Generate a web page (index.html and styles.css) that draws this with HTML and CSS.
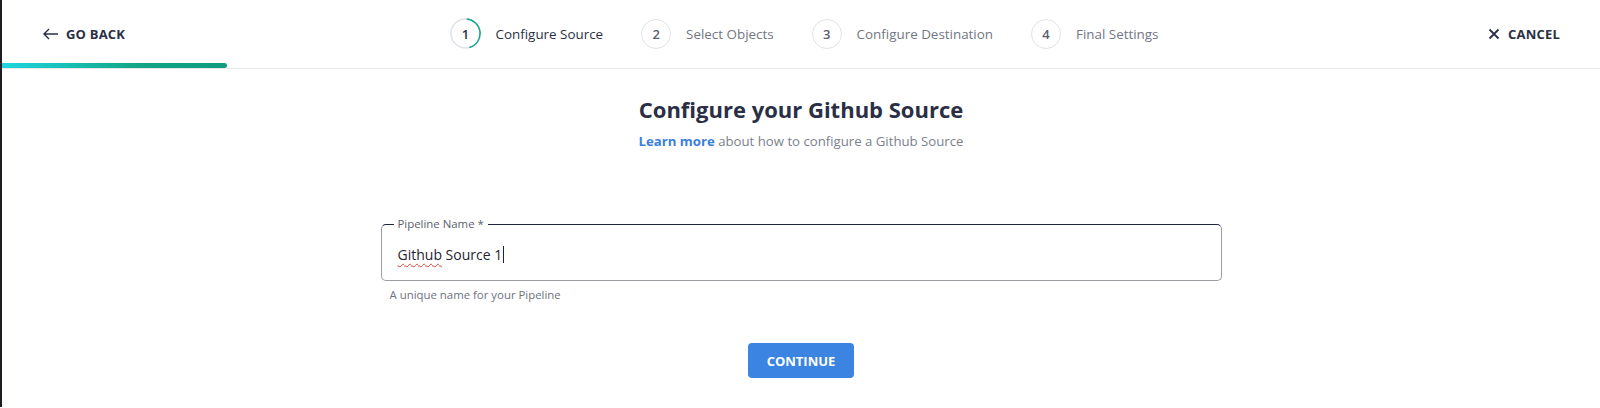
FILE: index.html
```html
<!DOCTYPE html>
<html lang="en">
<head>
    <meta charset="UTF-8">
    <meta name="viewport" content="width=device-width, initial-scale=1.0">
    <title>Create Pipeline</title>
    <link rel="stylesheet" href="styles.css">
</head>
<body>
    <div id="wizard">
        <div id="topbar">
            <a class="nav-link back" href="#">
                <svg width="16" height="12" viewBox="0 0 16 12"><path d="M15 6H1.5M6 1L1 6l5 5" fill="none" stroke="#2a2f45" stroke-width="1.4"/></svg>
                Go back
            </a>

            <ol id="steps">
                <li class="step active">
                    <span class="step-num">
                        <svg width="31" height="31" viewBox="0 0 32 32">
                            <circle cx="16" cy="16" r="15" fill="none" stroke="#dfe2e8" stroke-width="1.5"/>
                            <path d="M17.3 1.06A15 15 0 0 1 19.9 30.5" fill="none" stroke="#14a889" stroke-width="1.6"/>
                        </svg>
                        <b>1</b>
                    </span>
                    Configure Source
                </li>
                <li class="step"><span class="step-num"><b>2</b></span>Select Objects</li>
                <li class="step"><span class="step-num"><b>3</b></span>Configure Destination</li>
                <li class="step"><span class="step-num"><b>4</b></span>Final Settings</li>
            </ol>

            <a class="nav-link cancel" href="#">
                <svg width="12" height="12" viewBox="0 0 12 12"><path d="M1.5 1.5l9 9M10.5 1.5l-9 9" stroke="#2a2f45" stroke-width="1.8"/></svg>
                Cancel
            </a>

            <div id="progress"></div>
        </div>

        <div id="content">
            <h1>Configure your Github Source</h1>
            <p class="intro"><a href="#">Learn more</a> about how to configure a Github Source</p>

            <div class="field">
                <fieldset>
                    <legend>Pipeline Name *</legend>
                    <div class="field-value"><span class="typo">Github</span> Source 1<span class="caret"></span></div>
                </fieldset>
                <div class="hint">A unique name for your Pipeline</div>
            </div>

            <button>Continue</button>
        </div>
    </div>
</body>
</html>
```

FILE: styles.css
```css
body {
    margin: 0;
    font-family: "Open Sans", "Noto Sans", sans-serif;
    color: #2a2f45;
    background: #fff;
}

#wizard {
    border-left: 2px solid #1c1c24;
    min-height: 408px;
    box-sizing: border-box;
}

#topbar {
    position: relative;
    display: grid;
    grid-template-columns: 1fr auto 1fr;
    align-items: center;
    height: 67px;
    padding: 0 40px 1px 41px;
    border-top: 1px solid #f2f2f4;
    border-bottom: 1px solid #e7e8ec;
    box-sizing: content-box;
    margin-top: -1px;
}

.nav-link {
    display: flex;
    align-items: center;
    gap: 7px;
    font-size: 13px;
    font-weight: 700;
    text-transform: uppercase;
    letter-spacing: 0.2px;
    color: #2a2f45;
    text-decoration: none;
}

.cancel {
    justify-self: end;
    gap: 8px;
}

#progress {
    position: absolute;
    left: 0;
    bottom: 0;
    width: 225px;
    height: 5px;
    border-radius: 0 3px 3px 0;
    background: linear-gradient(90deg, #1dd6df, #13a586 60%, #119c7c);
}

#steps {
    display: flex;
    align-items: center;
    gap: 38px;
    margin: 0 0 0 6px;
    padding: 0;
    list-style: none;
}

.step {
    display: flex;
    align-items: center;
    gap: 15px;
    font-size: 13.4px;
    color: #727684;
}

.step.active {
    color: #2a2f45;
}

.step-num {
    position: relative;
    display: flex;
    align-items: center;
    justify-content: center;
    width: 28px;
    height: 28px;
    border: 1.5px solid #dfe2e8;
    border-radius: 50%;
}

.step-num b {
    font-size: 13px;
    font-weight: 600;
    color: #5a5f6e;
}

.step.active .step-num {
    border-color: transparent;
}

.step.active .step-num svg {
    position: absolute;
    left: -1.5px;
    top: -1.5px;
}

.step.active .step-num b {
    position: relative;
    color: #2a2f45;
}

#content {
    display: flex;
    flex-direction: column;
    align-items: center;
    padding-top: 25px;
}

h1 {
    margin: 0;
    font-size: 22px;
    line-height: 30px;
    font-weight: 700;
    color: #2a2f45;
}

.intro {
    margin: 8px 0 0;
    font-size: 13.2px;
    line-height: 18px;
    color: #7b7f8c;
}

.intro a {
    font-weight: 700;
    color: #3a7fde;
    text-decoration: none;
}

.field {
    width: 841px;
    margin-top: 67px;
}

fieldset {
    margin: 0;
    padding: 0 16px;
    border: 1px solid #9a9ca6;
    border-top-color: #1f2740;
    border-radius: 5px;
}

legend {
    margin-left: -4px;
    padding: 0 4px;
    font-size: 11.4px;
    line-height: 14px;
    color: #5b5f6c;
}

.field-value {
    height: 20px;
    padding: 14px 0 15px;
    font-size: 14px;
    line-height: 20px;
    color: #1f2433;
}

.typo {
    text-decoration: underline wavy #e0403a;
    text-decoration-thickness: 1px;
    text-underline-offset: 3px;
}

.caret {
    display: inline-block;
    width: 1px;
    height: 17px;
    margin-left: 1px;
    vertical-align: -3px;
    background: #1f2433;
}

.hint {
    margin: 6px 0 0 9px;
    font-size: 11.4px;
    line-height: 15px;
    color: #6e7280;
}

button {
    margin-top: 41px;
    height: 35px;
    padding: 0 19px;
    border: 0;
    border-radius: 4px;
    background: #3b84e2;
    color: #fff;
    font-family: inherit;
    font-size: 13px;
    font-weight: 700;
    text-transform: uppercase;
    cursor: pointer;
}
```
